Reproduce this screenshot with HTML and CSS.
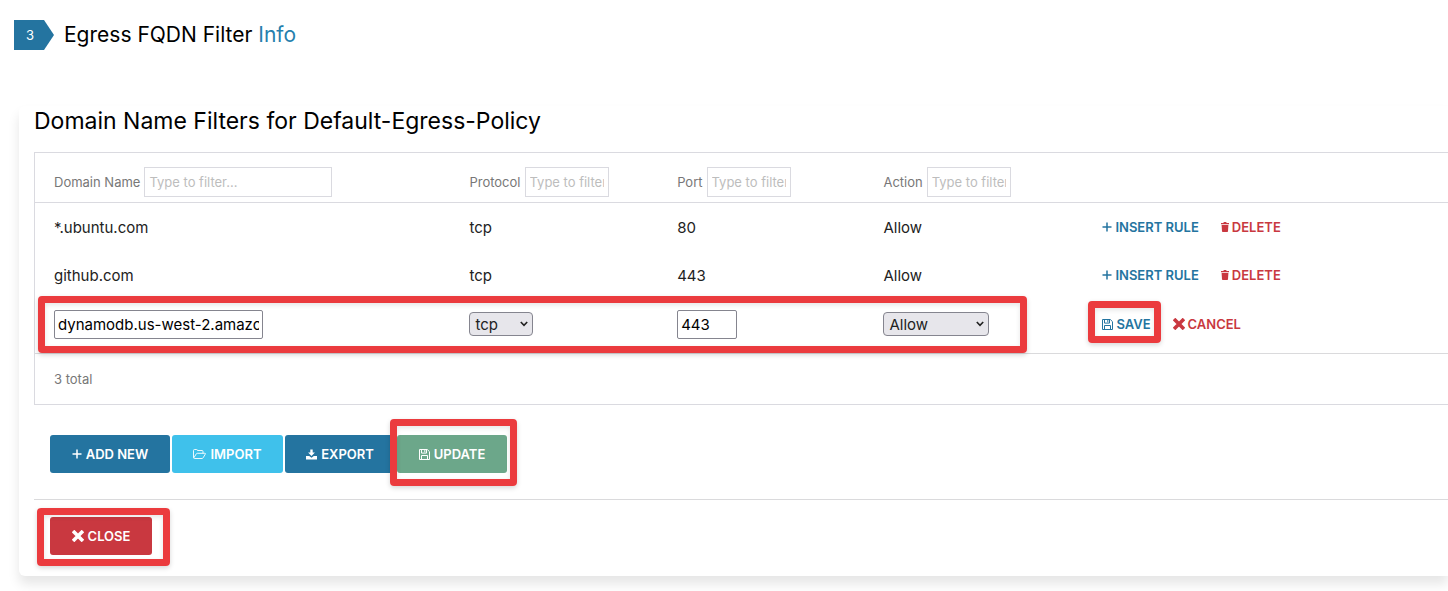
FILE: index.html
```html
<!DOCTYPE html>
<html lang="en">
<head>
<meta charset="utf-8">
<title>Egress FQDN Filter</title>
<link rel="stylesheet" href="styles.css">
</head>
<body>
<svg class="sprite" aria-hidden="true">
  <symbol id="plus" viewBox="0 0 10 10"><path d="M5 .5v9M.5 5h9" fill="none" stroke="currentColor" stroke-width="1.5"/></symbol>
  <symbol id="trash" viewBox="0 0 8 10"><path d="M0 1h2.200L3 0h2l.8 1H8v1.300H0zM.6 3h6.800l-.4 6.200q0 .8-.8.8H1.800q-.8 0-.8-.8z" fill="currentColor"/></symbol>
  <symbol id="save" viewBox="0 0 11 11"><path d="M.5.5h7.800l2.200 2.200v7.800H.5zM2.500.5v3.600h5V.5M5.800 1v2.300M2.500 10.500V6.500h6v4" fill="none" stroke="currentColor" stroke-width="1"/></symbol>
  <symbol id="cross" viewBox="0 0 12 12"><path d="M2.300 2.300l7.400 7.400M9.700 2.300l-7.400 7.400" fill="none" stroke="currentColor" stroke-width="3.600" stroke-linecap="square"/></symbol>
  <symbol id="folder" viewBox="0 0 13 10"><path d="M.5 8.500V1.500q0-1 1-1h2q1 0 1 1h4.500q1 0 1 1v1.800M.7 9l2.500-4q.4-.7 1.200-.7h7.400q1 0 .5.8L10.200 8.700q-.5.8-1.200.8H1.500q-1 0-1-1" fill="none" stroke="currentColor" stroke-width=".9"/></symbol>
  <symbol id="download" viewBox="0 0 11 10"><path d="M4.300 0h2.400v3h2.200L5.500 6.500 2.100 3h2.200zM0 6.500h3.200l2.300 1.700 2.300-1.700H11V10H0z" fill="currentColor"/></symbol>
  <symbol id="chevron" viewBox="0 0 8 6"><path d="M.8 1L4 4.400 7.200 1" fill="none" stroke="currentColor" stroke-width="1.600"/></symbol>
</svg>

<header class="step">
  <span class="step-badge">3</span>
  <h1 class="step-title">Egress FQDN Filter <a href="#info">Info</a></h1>
</header>

<main class="panel">
  <h2 class="panel-title">Domain Name Filters for Default-Egress-Policy</h2>

  <div class="grid">
    <table class="rules">
      <colgroup><col class="col-domain"><col class="col-protocol"><col class="col-port"><col class="col-action"><col></colgroup>
      <thead>
        <tr>
          <th><label class="filter">Domain Name <input class="filter-input wide" type="text" placeholder="Type to filter..."></label></th>
          <th><label class="filter">Protocol <input class="filter-input" type="text" placeholder="Type to filter..."></label></th>
          <th><label class="filter">Port <input class="filter-input" type="text" placeholder="Type to filter..."></label></th>
          <th><label class="filter">Action <input class="filter-input" type="text" placeholder="Type to filter..."></label></th>
          <th></th>
        </tr>
      </thead>
      <tbody>
        <tr>
          <td>*.ubuntu.com</td><td>tcp</td><td>80</td><td>Allow</td>
          <td><div class="row-actions">
            <button class="link" type="button"><svg class="i-plus"><use href="#plus"/></svg>INSERT RULE</button>
            <button class="link danger" type="button"><svg class="i-trash"><use href="#trash"/></svg>DELETE</button>
          </div></td>
        </tr>
        <tr>
          <td>github.com</td><td>tcp</td><td>443</td><td>Allow</td>
          <td><div class="row-actions">
            <button class="link" type="button"><svg class="i-plus"><use href="#plus"/></svg>INSERT RULE</button>
            <button class="link danger" type="button"><svg class="i-trash"><use href="#trash"/></svg>DELETE</button>
          </div></td>
        </tr>
        <tr class="editing">
          <td><input class="field domain" type="text" aria-label="Domain name" value="dynamodb.us-west-2.amazonaws.com"><span class="mark mark-row"></span></td>
          <td><span class="select"><select aria-label="Protocol"><option>tcp</option><option>udp</option></select><svg><use href="#chevron"/></svg></span></td>
          <td><input class="field port" type="text" aria-label="Port" value="443"></td>
          <td><span class="select select-wide"><select aria-label="Action"><option>Allow</option><option>Deny</option></select><svg><use href="#chevron"/></svg></span></td>
          <td><div class="row-actions">
            <span class="marked"><button class="link" type="button"><svg class="i-save"><use href="#save"/></svg>SAVE</button><span class="mark mark-save"></span></span>
            <button class="link danger" type="button"><svg class="i-cross"><use href="#cross"/></svg>CANCEL</button>
          </div></td>
        </tr>
      </tbody>
    </table>
    <p class="total">3 total</p>
  </div>

  <div class="toolbar">
    <button class="btn add" type="button"><svg class="i-plus"><use href="#plus"/></svg>ADD NEW</button>
    <button class="btn import" type="button"><svg class="i-folder"><use href="#folder"/></svg>IMPORT</button>
    <button class="btn" type="button"><svg class="i-save"><use href="#download"/></svg>EXPORT</button>
    <span class="marked"><button class="btn update" type="button"><svg class="i-save"><use href="#save"/></svg>UPDATE</button><span class="mark mark-update"></span></span>
  </div>

  <footer class="panel-footer">
    <span class="marked"><button class="btn close" type="button"><svg class="i-cross"><use href="#cross"/></svg>CLOSE</button><span class="mark mark-close"></span></span>
  </footer>
</main>
</body>
</html>
```
FILE: styles.css
```css
* { box-sizing: border-box; }

body {
  margin: 0;
  padding: 20px 0 15px;
  background: #fff;
  color: #222;
  font-family: Inter, "Open Sans", sans-serif;
  font-size: 15px;
  overflow-x: hidden;
}

button, input, select { font: inherit; color: inherit; }
.sprite { display: none; }

.step {
  display: flex;
  align-items: center;
  gap: 10px;
  height: 30px;
  padding-left: 14px;
}
.step-badge {
  width: 40px;
  height: 30px;
  padding-right: 8px;
  background: #2474a0;
  color: #fff;
  clip-path: polygon(0 0, 75% 0, 100% 50%, 75% 100%, 0 100%);
  font-size: 13px;
  line-height: 30px;
  text-align: center;
}
.step-title {
  margin: 0;
  color: #000;
  font-size: 21px;
  font-weight: 400;
  line-height: 30px;
}
.step-title a { color: #2580ad; text-decoration: none; }

.panel {
  margin: 56px 0 0 19px;
  padding-left: 15px;
  border-radius: 6px 0 0 6px;
  box-shadow: 0 8px 12px rgba(0, 0, 0, .1);
}
.panel-title {
  margin: 0;
  color: #000;
  font-size: 23px;
  font-weight: 400;
  line-height: 30px;
  padding-bottom: 16px;
}

.grid { border: 1px solid #dadae0; border-right: 0; }
.rules {
  width: 100%;
  table-layout: fixed;
  border-collapse: separate;
  border-spacing: 0;
}
.col-domain { width: 29.4%; }
.col-protocol { width: 14.7%; }
.col-port { width: 14.6%; }
.col-action { width: 15.5%; }
.rules th {
  padding: 14px 0 5px 19px;
  border-bottom: 1px solid #dadae0;
  font-weight: 400;
  text-align: left;
}
.rules td { height: 48px; padding: 0 0 0 19px; white-space: nowrap; }
.rules .editing { position: relative; }
.rules .editing td {
  height: 55px;
  padding-bottom: 4px;
  border-bottom: 1px solid #dadadc;
}
.filter {
  display: flex;
  align-items: center;
  gap: 4px;
  color: #777;
  font-size: 13px;
  white-space: nowrap;
}
.filter-input {
  width: 84px;
  height: 30px;
  padding: 0 4px;
  border: 1px solid #dadae0;
  background: #fff;
}
.filter-input.wide { width: 188px; }
.filter-input::placeholder { color: #bdbdbd; }

.field {
  display: block;
  height: 29px;
  padding: 0 3px;
  border: 1px solid #85858f;
  border-radius: 2px;
  background: #fff;
  color: #000;
}
.domain { width: 209px; }
.port { width: 60px; }
.select { position: relative; display: block; width: 64px; height: 24px; }
.select-wide { width: 106px; }
.select select {
  width: 100%;
  height: 24px;
  padding: 0 5px;
  border: 1px solid #85858f;
  border-radius: 4px;
  background: #e7e6eb;
  appearance: none;
}
.select svg {
  position: absolute;
  top: 9px;
  right: 5px;
  width: 8px;
  height: 6px;
  pointer-events: none;
}

.row-actions { display: flex; align-items: center; gap: 22px; }
.link {
  display: flex;
  align-items: center;
  gap: 3px;
  padding: 0;
  border: 0;
  background: none;
  color: #2474a0;
  font-size: 13px;
  font-weight: 600;
  line-height: 20px;
}
.danger { color: #c93840; }
.i-plus { width: 10px; height: 10px; }
.i-trash { width: 8px; height: 10px; }
.i-save { width: 11px; height: 11px; }
.i-cross { width: 12px; height: 12px; }
.i-folder { width: 13px; height: 10px; }

.total { margin: 0; padding: 0 19px; color: #777; font-size: 13px; line-height: 50px; }

.toolbar {
  display: flex;
  gap: 2px;
  padding: 30px 16px 26px;
  border-bottom: 1px solid #dadadc;
}
.btn {
  display: flex;
  align-items: center;
  justify-content: center;
  gap: 4px;
  min-width: 110px;
  height: 38px;
  padding: 0 18px;
  border: 0;
  border-radius: 3px;
  background: #2474a0;
  color: #fff;
  font-size: 13px;
  font-weight: 600;
}
.add { min-width: 120px; }
.import { min-width: 111px; background: #3fc1eb; }
.update { background: #6ca78a; }
.close { min-width: 102px; background: #c93840; }
.panel-footer { display: flex; padding: 17px 16px 21px; }

.marked { position: relative; display: block; }
.mark {
  position: absolute;
  border: 7px solid #eb3b3e;
  border-radius: 4px;
  box-shadow: 0 2px 5px rgba(0, 0, 0, .16), inset 0 2px 5px rgba(0, 0, 0, .1);
  pointer-events: none;
}
.mark-row { top: -3px; left: 3px; width: 70%; height: 57px; }
.mark-save { inset: -13px -10px -9px -14px; }
.mark-update { inset: -16px -10px -13px -7px; }
.mark-close { inset: -9px -18px -11px -13px; }
```
